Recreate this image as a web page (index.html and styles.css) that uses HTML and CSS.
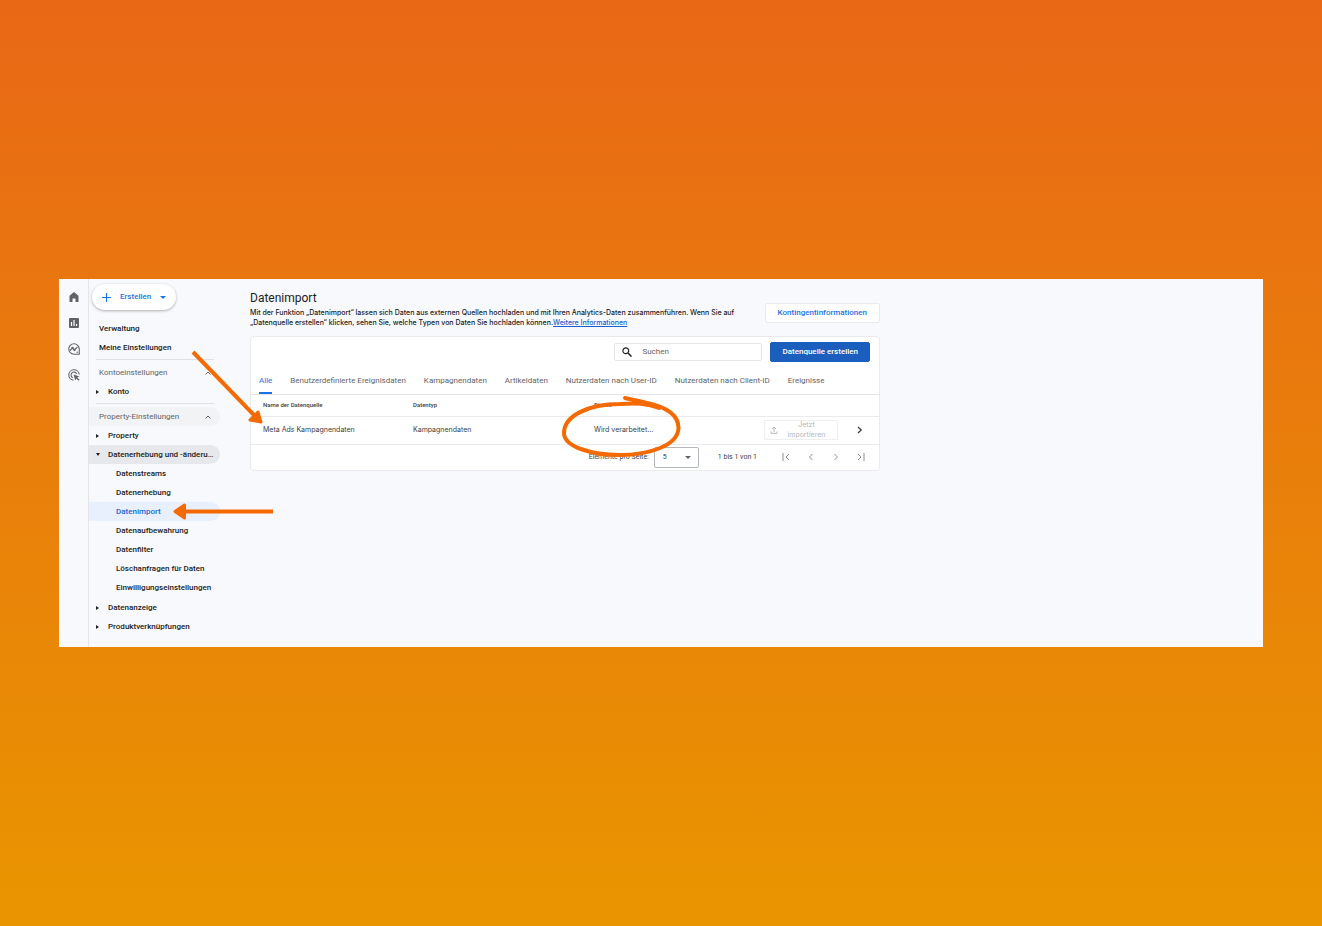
FILE: index.html
```html
<!DOCTYPE html>
<html lang="de">
<head>
  <meta charset="UTF-8" />
  <meta name="viewport" content="width=device-width, initial-scale=1.0" />
  <title>Datenimport</title>
  <link rel="stylesheet" href="styles.css">
</head>
<body>
  <div class="window">
    <nav class="rail" aria-label="Hauptmenü">
      <a href="#" aria-label="Startseite">
        <svg viewBox="0 0 24 24"><path d="M3 9.500 12 2l9 7.500V22h-6v-7H9v7H3z" fill="#5f6368"/></svg>
      </a>
      <a href="#" aria-label="Berichte">
        <svg viewBox="0 0 24 24"><rect x="2" y="2" width="20" height="20" rx="2" fill="#5f6368"/><path d="M7 10v8M12 6v12M17 14v4" stroke="#fff" stroke-width="2.400"/></svg>
      </a>
      <a href="#" aria-label="Explorative Datenanalyse">
        <svg viewBox="0 0 24 24" fill="none" stroke="#5f6368" stroke-width="2.200"><path d="M12 22.500a10.500 10.500 0 1 1 10.500-10.500v10.500z"/><path d="m4 15 5-5 4 4 6-6"/><circle cx="9" cy="10" r="1.200"/><circle cx="13" cy="14" r="1.200"/><path d="M17 18.500h3"/></svg>
      </a>
      <a href="#" aria-label="Werbung">
        <svg viewBox="0 0 24 24" fill="none" stroke="#5f6368" stroke-width="2.200"><path d="M11 22.500A10.500 10.500 0 1 1 22.500 11"/><path d="M9.500 17.500A6 6 0 1 1 17.500 9.500"/><path d="m11 11 12 4-4.500 2 4.500 4.500-2 2-4.500-4.500-2 4z" fill="#5f6368" stroke="none"/></svg>
      </a>
    </nav>

    <aside class="sidebar">
      <button class="create" type="button">
        <svg class="plus" viewBox="0 0 10 10"><path d="M5 0v10M0 5h10" stroke="#1a73e8" stroke-width="1.300"/></svg>
        <span>Erstellen</span>
        <svg class="caret" viewBox="0 0 6 3"><path d="M0 0h6L3 3z" fill="#1a73e8"/></svg>
      </button>
      <ul class="menu">
        <li><a class="item" href="#">Verwaltung</a></li>
        <li><a class="item" href="#">Meine Einstellungen</a></li>
      </ul>
      <button class="group" type="button">Kontoeinstellungen
        <svg class="chevron" viewBox="0 0 6 4"><path d="m.5 3.500 2.500-2.500 2.500 2.500" fill="none" stroke="#5f6368"/></svg>
      </button>
      <ul class="menu">
        <li><a class="item parent" href="#">Konto</a></li>
      </ul>
      <button class="group shaded" type="button">Property-Einstellungen
        <svg class="chevron" viewBox="0 0 6 4"><path d="m.5 3.500 2.500-2.500 2.500 2.500" fill="none" stroke="#5f6368"/></svg>
      </button>
      <ul class="menu">
        <li><a class="item parent" href="#">Property</a></li>
        <li>
          <a class="item parent open" href="#">Datenerhebung und -änderu…</a>
          <ul class="submenu">
            <li><a class="item" href="#">Datenstreams</a></li>
            <li><a class="item" href="#">Datenerhebung</a></li>
            <li><a class="item current" href="#">Datenimport</a></li>
            <li><a class="item" href="#">Datenaufbewahrung</a></li>
            <li><a class="item" href="#">Datenfilter</a></li>
            <li><a class="item" href="#">Löschanfragen für Daten</a></li>
            <li><a class="item" href="#">Einwilligungseinstellungen</a></li>
          </ul>
        </li>
        <li><a class="item parent" href="#">Datenanzeige</a></li>
        <li><a class="item parent" href="#">Produktverknüpfungen</a></li>
      </ul>
    </aside>

    <main class="content">
      <header class="intro">
        <div class="intro-text">
          <h1>Datenimport</h1>
          <p>Mit der Funktion „Datenimport“ lassen sich Daten aus externen Quellen hochladen und mit Ihren Analytics-Daten zusammenführen. Wenn Sie auf „Datenquelle erstellen“ klicken, sehen Sie, welche Typen von Daten Sie hochladen können.<a href="#">Weitere Informationen</a></p>
        </div>
        <button class="quota" type="button">Kontingentinformationen</button>
      </header>

      <section class="card">
        <div class="toolbar">
          <label class="search">
            <svg viewBox="0 0 10 10"><circle cx="3.800" cy="3.800" r="2.900" fill="none" stroke="#202124" stroke-width="1.200"/><path d="m6 6 3.500 3.500" stroke="#202124" stroke-width="1.500"/></svg>
            <input type="text" placeholder="Suchen" aria-label="Suchen">
          </label>
          <button class="primary" type="button">Datenquelle erstellen</button>
        </div>

        <div class="tabs">
          <a class="tab active" href="#">Alle</a>
          <a class="tab" href="#">Benutzerdefinierte Ereignisdaten</a>
          <a class="tab" href="#">Kampagnendaten</a>
          <a class="tab" href="#">Artikeldaten</a>
          <a class="tab" href="#">Nutzerdaten nach User-ID</a>
          <a class="tab" href="#">Nutzerdaten nach Client-ID</a>
          <a class="tab" href="#">Ereignisse</a>
        </div>

        <table class="sources">
          <colgroup>
            <col class="col-name">
            <col class="col-type">
            <col class="col-status">
            <col>
          </colgroup>
          <thead>
            <tr>
              <th>Name der Datenquelle</th>
              <th>Datentyp</th>
              <th>Status</th>
              <th></th>
            </tr>
          </thead>
          <tbody>
            <tr>
              <td>Meta Ads Kampagnendaten</td>
              <td>Kampagnendaten</td>
              <td>Wird verarbeitet…</td>
              <td>
                <div class="actions">
                  <button class="import" type="button" disabled>
                    <svg viewBox="0 0 8 8"><path d="M4 6V1.200M2 3l2-2 2 2M1 5.500v1.800h6V5.500" fill="none" stroke="#b4b7ba"/></svg>
                    <span>Jetzt importieren</span>
                  </button>
                  <a class="details" href="#" aria-label="Details">
                    <svg viewBox="0 0 6 8"><path d="m1 1 3.200 3L1 7" fill="none" stroke="#3c4043" stroke-width="1.300"/></svg>
                  </a>
                </div>
              </td>
            </tr>
          </tbody>
        </table>

        <footer class="pager">
          <label for="page-size">Elemente pro Seite:</label>
          <span class="size">
            <select id="page-size"><option>5</option><option>10</option></select>
            <svg viewBox="0 0 6 3"><path d="M0 0h6L3 3z" fill="#5f6368"/></svg>
          </span>
          <span class="range">1 bis 1 von 1</span>
          <div class="steps">
            <button type="button" aria-label="Erste Seite"><svg viewBox="0 0 8 8"><path d="M1 0v8M7 1 4 4l3 3" fill="none" stroke="#8a8d91"/></svg></button>
            <button type="button" aria-label="Vorherige Seite"><svg viewBox="0 0 8 8"><path d="M5.500 1 2.500 4l3 3" fill="none" stroke="#8a8d91"/></svg></button>
            <button type="button" aria-label="Nächste Seite"><svg viewBox="0 0 8 8"><path d="m2.500 1 3 3-3 3" fill="none" stroke="#8a8d91"/></svg></button>
            <button type="button" aria-label="Letzte Seite"><svg viewBox="0 0 8 8"><path d="m1 1 3 3-3 3M7 0v8" fill="none" stroke="#8a8d91"/></svg></button>
          </div>
        </footer>
      </section>
    </main>

    <!-- arrows and circle drawn over the window -->
    <svg class="marks" viewBox="0 0 640 368" aria-hidden="true">
      <g fill="none" stroke="#f56a00" stroke-width="4">
        <path d="M134 73 196 137"/>
        <path d="M214 232.500H124"/>
        <path d="M566 119C574 121 581 122 588 124C607 128 619.500 136 619.500 149C619 167 589 176 561 176C533 176 505 168 505 154C505 137 529 125 561 125C576 124 588 124 600 129" stroke-linecap="round"/>
      </g>
      <g fill="#f56a00" stroke="#f56a00" stroke-width="3" stroke-linejoin="round">
        <path d="m202 143-11-2 8-8z"/>
        <path d="m116 232.500 9.500-6.500v13z"/>
      </g>
    </svg>
  </div>
</body>
</html>
```
FILE: styles.css
```css
*,
*::before,
*::after {
  box-sizing: border-box;
}

body {
  margin: 0;
  min-height: 100vh;
  padding: 0 59px;
  display: flex;
  align-items: center;
  background: linear-gradient(#e96816, #e99500);
  font-family: Roboto, "Liberation Sans", sans-serif;
  font-size: 8px;
  line-height: 10px;
  color: #202124;
}

button,
input,
select {
  font: inherit;
  color: inherit;
  margin: 0;
  cursor: pointer;
}

a {
  color: inherit;
  text-decoration: none;
}

svg {
  display: block;
  flex: none;
}

ul {
  list-style: none;
  margin: 0;
  padding: 0;
}

.window {
  position: relative;
  flex: 1;
  display: flex;
  background: #f8f9fc;
}

/* icon rail */

.rail {
  flex: none;
  width: 30px;
  padding-top: 12px;
  border-right: 1px solid #e3e5e8;
  display: flex;
  flex-direction: column;
  align-items: center;
  gap: 14px;
}

.rail svg {
  width: 12px;
  height: 12px;
}

/* sidebar */

.sidebar {
  flex: none;
  width: 131px;
  padding: 5px 0 11px;
  font-weight: 500;
}

.create {
  display: flex;
  align-items: center;
  gap: 9px;
  height: 26px;
  margin: 0 0 9px 3px;
  padding: 0 10px;
  border: 0;
  border-radius: 13px;
  background: #fff;
  color: #1a73e8;
  box-shadow: 0 1px 3px rgba(60, 64, 67, .4);
}

.plus {
  width: 9px;
  height: 9px;
}

.caret {
  width: 6px;
  height: 3px;
}

.item {
  display: flex;
  align-items: center;
  height: 19px;
  padding-left: 10px;
  border-radius: 0 10px 10px 0;
  white-space: nowrap;
}

.item.parent::before {
  content: "";
  width: 3px;
  margin: 0 9px 0 -3px;
  border: 2px solid transparent;
  border-left: 3px solid #202124;
  border-right: 0;
}

.item.open {
  background: #e6e8eb;
}

.item.open::before {
  width: 4px;
  margin-right: 8px;
  border: 2px solid transparent;
  border-top: 3px solid #202124;
  border-bottom: 0;
}

.submenu {
  padding-bottom: 1px;
}

.submenu .item {
  padding-left: 27px;
}

.item.current {
  background: #e8f0fe;
  color: #1967d2;
}

.group {
  position: relative;
  display: flex;
  align-items: center;
  justify-content: space-between;
  width: 100%;
  height: 19px;
  margin-top: 6px;
  padding: 0 9px 0 10px;
  border: 0;
  border-radius: 0 10px 10px 0;
  background: none;
  font-weight: 400;
  color: #5f6368;
}

/* hairline above each group */
.group::before {
  content: "";
  position: absolute;
  top: -4px;
  left: 7px;
  right: 6px;
  border-top: 1px solid #dfe1e5;
}

.group.shaded {
  background: #f1f3f4;
}

.chevron {
  width: 6px;
  height: 4px;
}

/* content */

.content {
  flex: 1;
  max-width: 660px;
  padding: 11px 0 0 30px;
}

.intro {
  display: flex;
  align-items: flex-end;
  justify-content: space-between;
}

.intro-text {
  max-width: 500px;
}

.intro h1 {
  margin: 0;
  font-size: 12px;
  line-height: 16px;
  font-weight: 400;
}

.intro p {
  margin: 2px 0 0;
  font-family: Inter, sans-serif;
  font-size: 7px;
  font-weight: 500;
}

.intro p a {
  color: #1a5fd0;
  text-decoration: underline;
}

.quota,
.primary {
  height: 20px;
  border: 1px solid #e8eaed;
  border-radius: 2px;
  padding: 0 12px;
  background: #fff;
  color: #1a73e8;
  font-weight: 500;
}

.quota {
  margin-bottom: 5px;
}

.primary {
  padding: 0 11px;
  background: #1b5ebe;
  border-color: #1b5ebe;
  color: #fff;
}

.card {
  margin-top: 8px;
  border: 1px solid #e8eaed;
  border-radius: 4px;
  background: #fff;
  color: #5f6368;
}

.toolbar {
  display: flex;
  justify-content: flex-end;
  align-items: center;
  gap: 8px;
  padding: 5px 9px 0;
}

.search {
  display: flex;
  align-items: center;
  gap: 10px;
  width: 148px;
  height: 18px;
  padding: 0 7px;
  border: 1px solid #e3e5e8;
  border-radius: 2px;
}

.search svg {
  width: 10px;
  height: 10px;
}

.search input {
  flex: 1;
  min-width: 0;
  border: 0;
  padding: 0;
  background: none;
  outline: none;
}

.search input::placeholder {
  color: #5f6368;
  opacity: 1;
}

.tabs {
  display: flex;
  gap: 18px;
  padding: 5px 8px 0;
  border-bottom: 1px solid #e3e5e8;
}

.tab {
  height: 27px;
  line-height: 27px;
  white-space: nowrap;
  border-bottom: 2px solid transparent;
}

.tab.active {
  color: #1a73e8;
  border-color: #1a73e8;
}

.sources {
  width: 100%;
  table-layout: fixed;
  border-collapse: collapse;
  color: #3c4043;
}

.col-name {
  width: 150px;
}

.col-type {
  width: 181px;
}

.col-status {
  width: 170px;
}

.sources th,
.sources td {
  padding: 0 0 0 12px;
  text-align: left;
  border-bottom: 1px solid #e8eaed;
}

.sources th {
  height: 21px;
  font-size: 6px;
  font-weight: 500;
}

.sources td {
  height: 28px;
  font-family: Inter, sans-serif;
  font-size: 7px;
}

.actions {
  display: flex;
  align-items: center;
  gap: 19px;
}

.import {
  display: flex;
  align-items: center;
  gap: 6px;
  width: 74px;
  height: 20px;
  padding: 0 8px 0 5px;
  border: 1px solid #eceef0;
  border-radius: 1px;
  background: #fff;
  color: #b4b7ba;
}

.import span {
  flex: 1;
}

.import svg {
  width: 8px;
  height: 8px;
}

.details svg {
  width: 6px;
  height: 8px;
}

.pager {
  display: flex;
  align-items: center;
  justify-content: flex-end;
  height: 25px;
  padding-right: 14px;
  font-size: 7px;
  color: #3c4043;
}

.size {
  position: relative;
  margin: 0 19px 0 5px;
}

.size select {
  appearance: none;
  width: 45px;
  height: 21px;
  padding: 0 8px;
  border: 1px solid #b4b8bc;
  border-radius: 2px;
  background: #fff;
}

.size svg {
  position: absolute;
  top: 9px;
  right: 8px;
  width: 6px;
  height: 3px;
  pointer-events: none;
}

.range {
  margin-right: 25px;
}

.steps {
  display: flex;
  gap: 17px;
}

.steps button {
  border: 0;
  padding: 0;
  background: none;
}

.steps svg {
  width: 8px;
  height: 8px;
}

.marks {
  position: absolute;
  top: 0;
  left: 0;
  width: 640px;
  height: 368px;
  pointer-events: none;
}
```
